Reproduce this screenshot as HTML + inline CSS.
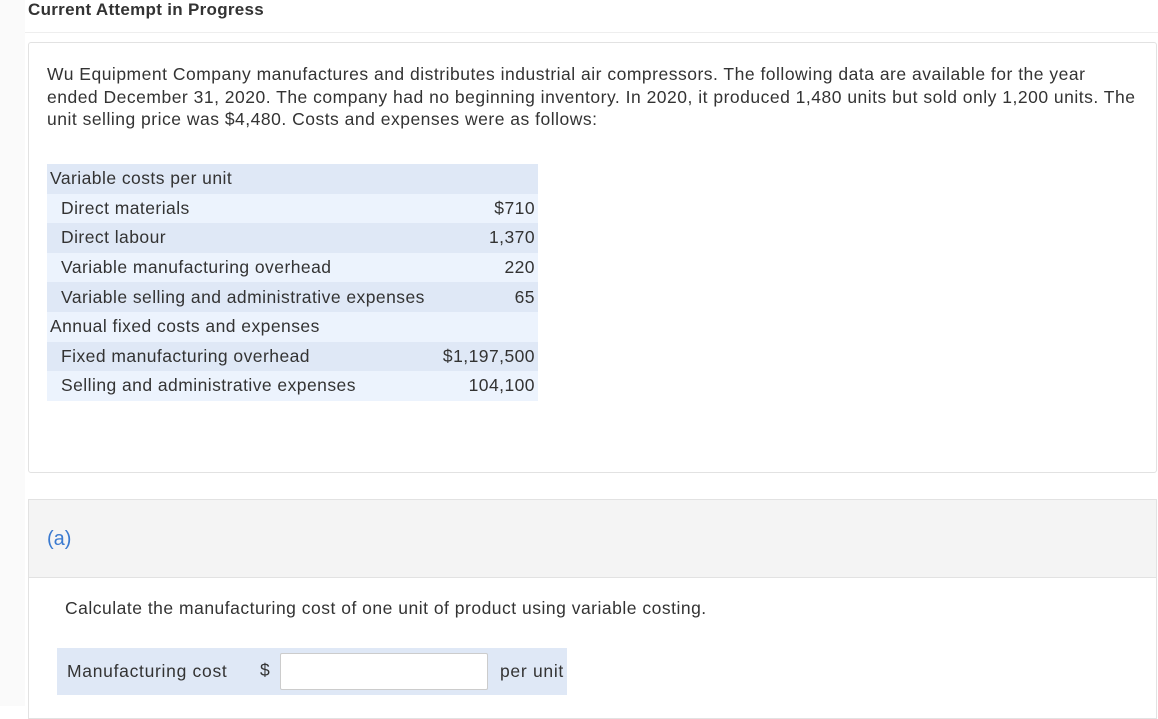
<!DOCTYPE html>
<html><head><meta charset="utf-8"><style>
*{margin:0;padding:0;box-sizing:border-box}
body{width:1158px;height:706px;overflow:hidden;background:#fff;font-family:"Liberation Sans",sans-serif;color:#333;position:relative}
.strip{position:absolute;left:0;top:0;width:25px;height:706px;background:#fafafa}
.title{position:absolute;left:28px;top:0;font-size:17px;font-weight:bold;color:#333;line-height:20px;letter-spacing:0.3px}
.sep{position:absolute;left:25px;top:32px;width:1133px;height:1px;background:#eee}
.card{position:absolute;left:28px;top:42px;width:1129px;height:431px;border:1px solid #e2e2e2;border-radius:3px}
.p{position:absolute;left:47px;top:63px;white-space:nowrap;font-size:17.5px;line-height:22.5px;letter-spacing:0.5px}
table{position:absolute;left:47px;top:164px;width:491px;border-collapse:collapse;font-size:17.5px;letter-spacing:0.45px}
td{height:29.6px;padding:0 3px;vertical-align:middle;white-space:nowrap}
tr:nth-child(odd){background:#dfe8f6}
tr:nth-child(even){background:#ecf3fd}
td.i{padding-left:14px}
td.r{text-align:right}
.sec{position:absolute;left:28px;top:499px;width:1129px;height:220px;border:1px solid #e2e2e2}
.hd{height:78px;background:#f4f4f4;border-bottom:1px solid #e2e2e2;position:relative}
.hd span{position:absolute;left:18px;top:28px;color:#3a7ad0;font-size:20px}
.q{position:absolute;left:65px;top:598px;font-size:17.5px;letter-spacing:0.5px;white-space:nowrap}
.row{position:absolute;left:57px;top:648px;width:510px;height:47px;background:#dfe8f6;font-size:17.5px;letter-spacing:0.7px}
.row .l{position:absolute;left:10px;top:13px;white-space:nowrap}
.row .d{position:absolute;left:203px;top:12px}
.row input{position:absolute;left:223px;top:5px;width:208px;height:37px;border:1px solid #ccc;border-radius:2px;background:#fff}
.row .u{position:absolute;left:443px;top:13px;white-space:nowrap}
</style></head><body>
<div class="strip"></div>
<div class="title">Current Attempt in Progress</div>
<div class="sep"></div>
<div class="card"></div>
<div class="p">Wu Equipment Company manufactures and distributes industrial air compressors. The following data are available for the year<br>ended December 31, 2020. The company had no beginning inventory. In 2020, it produced 1,480 units but sold only 1,200 units. The<br>unit selling price was $4,480. Costs and expenses were as follows:</div>
<table>
<tr><td>Variable costs per unit</td><td></td></tr>
<tr><td class="i">Direct materials</td><td class="r">$710</td></tr>
<tr><td class="i">Direct labour</td><td class="r">1,370</td></tr>
<tr><td class="i">Variable manufacturing overhead</td><td class="r">220</td></tr>
<tr><td class="i">Variable selling and administrative expenses</td><td class="r">65</td></tr>
<tr><td>Annual fixed costs and expenses</td><td></td></tr>
<tr><td class="i">Fixed manufacturing overhead</td><td class="r">$1,197,500</td></tr>
<tr><td class="i">Selling and administrative expenses</td><td class="r">104,100</td></tr>
</table>
<div class="sec"><div class="hd"><span>(a)</span></div></div>
<div class="q">Calculate the manufacturing cost of one unit of product using variable costing.</div>
<div class="row"><span class="l">Manufacturing cost</span><span class="d">$</span><input type="text"><span class="u">per unit</span></div>
</body></html>
